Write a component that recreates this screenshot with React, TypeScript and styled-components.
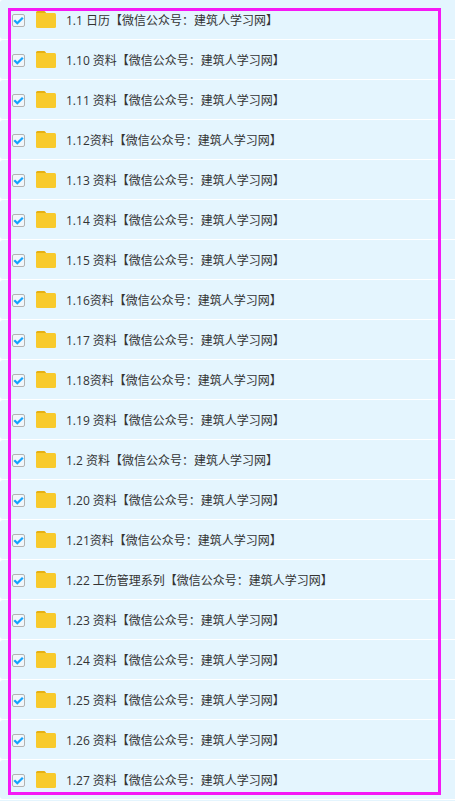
import React from 'react';
import styled, { createGlobalStyle } from 'styled-components';

const Global = createGlobalStyle`
  * { box-sizing: border-box; }
  body { margin: 0; background: #e4f5fe; font-family: "Open Sans", "Noto Sans CJK SC", sans-serif; }
`;

const Page = styled.main`
  position: relative;
  overflow: hidden;
  padding-bottom: 1px;
`;

const Outline = styled.div`
  position: absolute;
  inset: 8px 14px 6px 8px;
  border: 3px solid #f518f5;
  pointer-events: none;
`;

const List = styled.ul`
  display: grid;
  gap: 1px;
  margin: 0;
  padding: 0 0 1px;
  list-style: none;
  background: #fff;
`;

const Row = styled.li`
  height: 39px;
  border-radius: 3px 0 0 3px;
  background: #e4f5fe;
`;

const Label = styled.label`
  display: flex;
  align-items: center;
  height: 100%;
  padding: 2px 0 0 12px;
`;

const Box = styled.span`
  display: grid;
  width: 13px;
  height: 13px;
  margin-right: 11px;
  > * { grid-area: 1 / 1; }
`;

const Check = styled.input`
  appearance: none;
  width: 13px;
  height: 13px;
  margin: 0;
  border: 1px solid #b2b2b2;
  border-radius: 2px;
  background: #f0f6fa;
  & + svg { visibility: hidden; }
  &:checked + svg { visibility: visible; }
`;

const Tick = styled.svg`
  pointer-events: none;
  z-index: 1;
`;

const Folder = styled.svg`
  flex: none;
  margin: 0 10px 2px 0;
`;

const Name = styled.span`
  font-size: 12px;
  line-height: 18px;
  color: #333;
  white-space: nowrap;
`;

const titles = [
  '1.1 日历', '1.10 资料', '1.11 资料', '1.12资料', '1.13 资料', '1.14 资料', '1.15 资料',
  '1.16资料', '1.17 资料', '1.18资料', '1.19 资料', '1.2 资料', '1.20 资料', '1.21资料',
  '1.22 工伤管理系列', '1.23 资料', '1.24 资料', '1.25 资料', '1.26 资料', '1.27 资料',
];

export default function App() {
  return (
    <Page>
      <Global />
      <List>
        {titles.map((title) => (
          <Row key={title}>
            <Label>
              <Box>
                <Check type="checkbox" defaultChecked />
                <Tick width="13" height="13" viewBox="0 0 13 13" fill="none">
                  <path d="M2.3 6.2l3 3L10.8 3.7" stroke="#14a4fb" strokeWidth="2.3" />
                </Tick>
              </Box>
              <Folder width="20" height="17" viewBox="0 0 20 17">
                <path d="M0 1.5Q0 0 1.5 0H8q1 0 1.500 1L10.500 2.500V6H0z" fill="#e6b013" />
                <path d="M0 2h18.500Q20 2 20 3.500V15.500Q20 17 18.500 17H1.500Q0 17 0 15.500z" fill="#f8ca2c" />
              </Folder>
              <Name>{title}【微信公众号：建筑人学习网】</Name>
            </Label>
          </Row>
        ))}
      </List>
      <Outline />
    </Page>
  );
}
